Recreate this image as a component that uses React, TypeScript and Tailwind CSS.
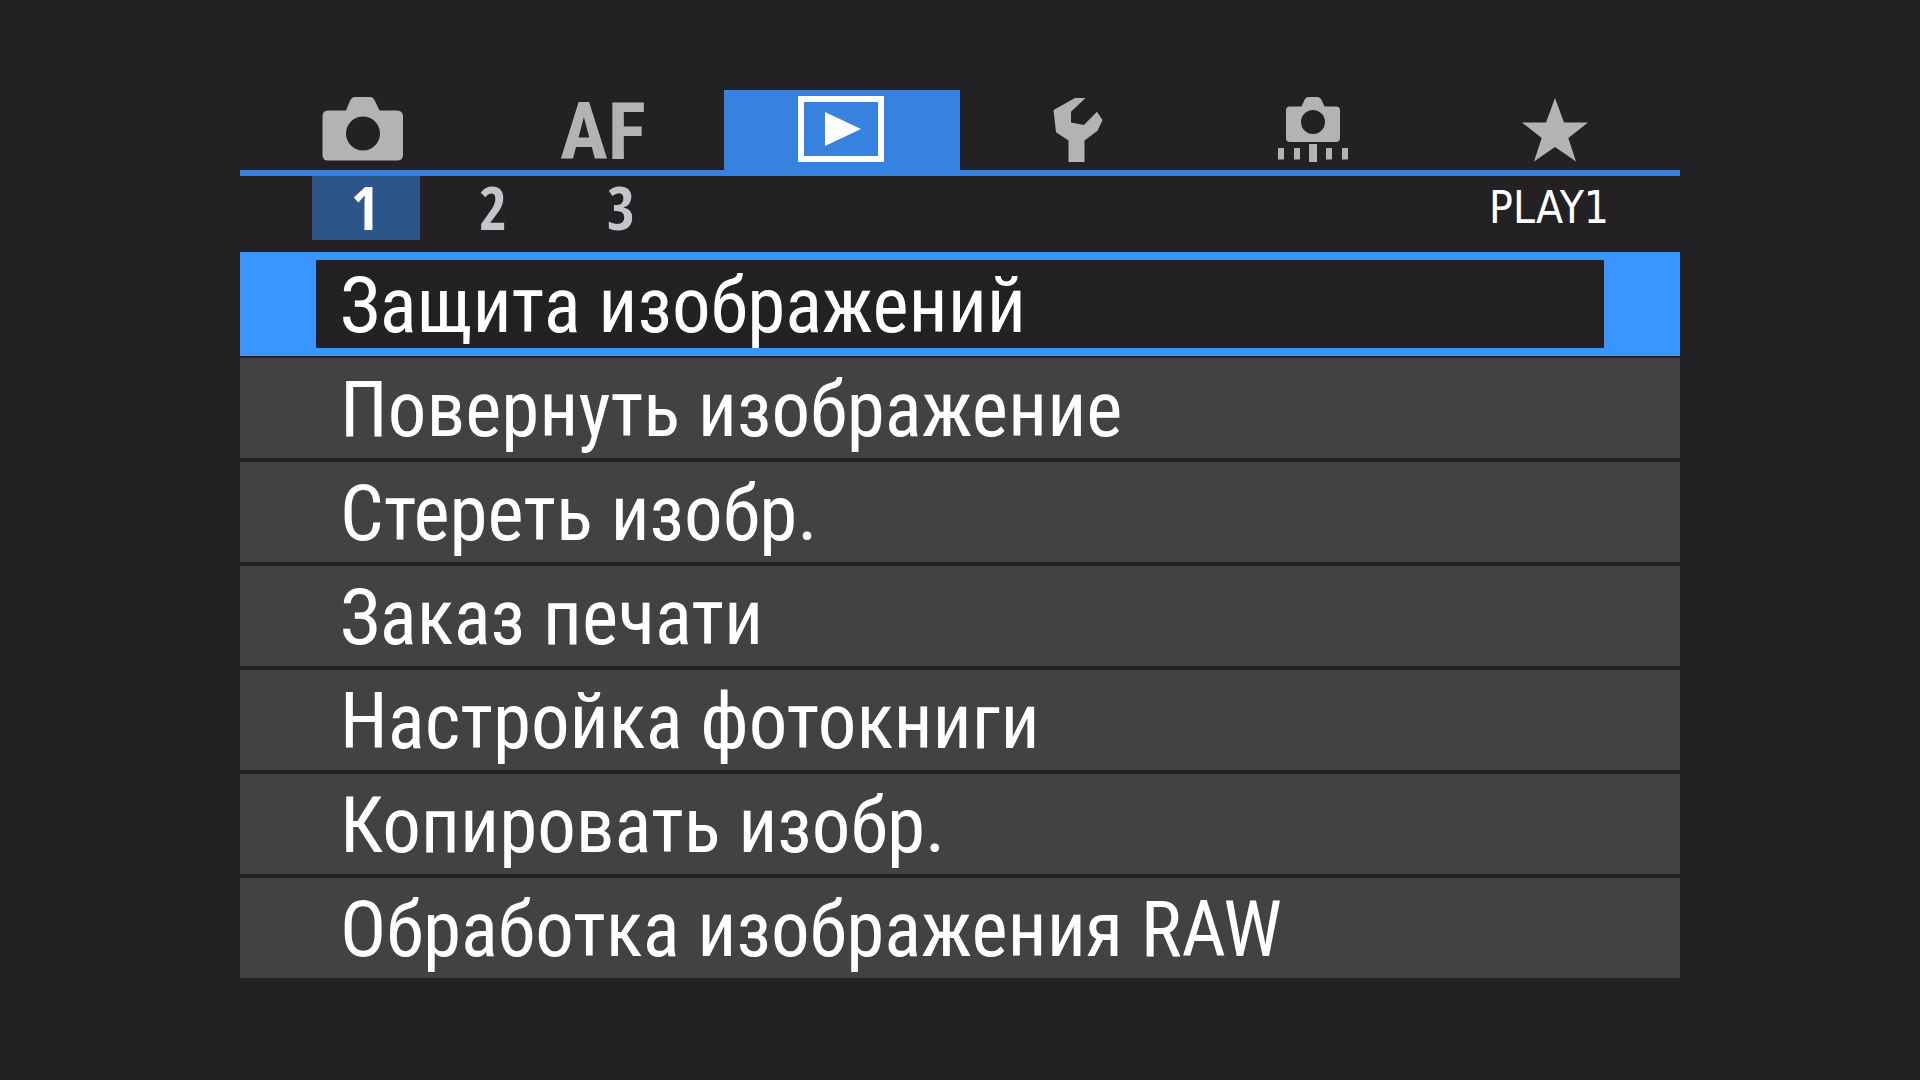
import type { ReactNode } from 'react';
import { useState } from 'react';
import clsx from 'clsx';

const ITEMS = [
  'Защита изображений',
  'Повернуть изображение',
  'Стереть изобр.',
  'Заказ печати',
  'Настройка фотокниги',
  'Копировать изобр.',
  'Обработка изображения RAW',
];

const PAGES = [1, 2, 3];

function CameraIcon() {
  return (
    <svg viewBox="0 0 82 66" className="h-[66px] w-[82px]" fill="currentColor" aria-hidden="true">
      <path
        fillRule="evenodd"
        d="M6 14.500H24L27.500 6Q29.500 1 33 1H48Q51.500 1 53.500 6L57.500 14.500H75Q81 14.500 81 20.500V59Q81 64.500 75 64.500H6Q.5 64.500 .5 59V20.500Q.5 14.500 6 14.500ZM41 20.500A17 17 0 1 0 41 54.500A17 17 0 1 0 41 20.500Z"
      />
    </svg>
  );
}

function PlayIcon() {
  return (
    <svg viewBox="0 0 86 66" className="h-[66px] w-[86px]" aria-hidden="true">
      <rect x="3" y="3" width="80" height="60" fill="none" stroke="#fff" strokeWidth="6" />
      <path d="M27 16L63 33L27 50Z" fill="#fff" />
    </svg>
  );
}

function WrenchIcon() {
  return (
    <svg viewBox="0 0 50 66" className="h-[66px] w-[50px]" fill="currentColor" aria-hidden="true">
      <path d="M22 2H32.500L18 15.700V26.500L31 29L44 15.700L49.500 24L44.500 34.700L31.500 44.500V66H15.500V44.500L3 36.300L.5 14Z" />
    </svg>
  );
}

function CustomIcon() {
  return (
    <svg viewBox="0 0 70 66" className="h-[66px] w-[70px]" fill="currentColor" aria-hidden="true">
      <path
        fillRule="evenodd"
        d="M12 10.500H23.500L26 5Q27.500 1 31 1H39Q42.500 1 44 5L46.500 10.500H58Q62 10.500 62 14.500V42Q62 46 58 46H12Q8 46 8 42V14.500Q8 10.500 12 10.500ZM35 14A12 12 0 1 0 35 38A12 12 0 1 0 35 14Z"
      />
      <path d="M0 52H6V63.500H0ZM16 52H22V63.500H16ZM31 48H39V66H31ZM48 52H54V63.500H48ZM64 52H70V63.500H64Z" />
    </svg>
  );
}

function StarIcon() {
  return (
    <svg viewBox="0 0 66 66" className="h-[66px] w-[66px]" fill="currentColor" aria-hidden="true">
      <path d="M33 2L42 26.500H66L46.300 42L54 65.500L33 51L12 65.500L19.700 42L0 26.500H24Z" />
    </svg>
  );
}

const TABS: { id: string; label: string; icon: ReactNode }[] = [
  { id: 'shoot', label: 'Съемка', icon: <CameraIcon /> },
  {
    id: 'af',
    label: 'AF',
    icon: <span className="font-['Roboto_Condensed','Noto_Sans',sans-serif] text-[80px] leading-[72px] font-bold">AF</span>,
  },
  { id: 'play', label: 'Просмотр', icon: <PlayIcon /> },
  { id: 'setup', label: 'Настройка', icon: <WrenchIcon /> },
  { id: 'custom', label: 'Пользовательские функции', icon: <CustomIcon /> },
  { id: 'my', label: 'Мое меню', icon: <StarIcon /> },
];

export default function App() {
  const [tab, setTab] = useState('play');
  const [page, setPage] = useState(1);
  const [selected, setSelected] = useState(0);

  return (
    <main className="min-h-screen bg-[#232124] px-[12.5%] pt-[90px] pb-[102px] text-white">
      {/* Main tabs */}
      <nav className="grid grid-cols-[238fr_238fr_236fr_232fr_234fr_246fr] gap-0.5 border-b-[6px] border-[#3882df] pr-0.5 pl-1">
        {TABS.map((t) => (
          <button
            key={t.id}
            type="button"
            aria-label={t.label}
            aria-pressed={t.id === tab}
            onClick={() => setTab(t.id)}
            className={clsx(
              'flex h-20 items-start justify-center pt-1.5',
              t.id === tab ? 'bg-[#3882df] pr-0.5 text-white' : 'text-[#b5b2b6]',
            )}
          >
            {t.icon}
          </button>
        ))}
      </nav>

      {/* Pages of the current tab */}
      <div className="mb-3 flex h-16 items-center justify-between pr-[71px] pl-[72px]">
        <div className="flex gap-5">
          {PAGES.map((p) => (
            <button
              key={p}
              type="button"
              aria-pressed={p === page}
              onClick={() => setPage(p)}
              className={clsx(
                "h-16 w-[108px] pr-0.5 pb-0.5 font-['Open_Sans_Condensed','Noto_Sans',sans-serif] text-[60px] leading-[60px] font-bold",
                p === page ? 'bg-[#2d5688] text-white' : 'text-[#c6c4c8]',
              )}
            >
              {p}
            </button>
          ))}
        </div>
        <span className="font-['DejaVu_Sans_Condensed','DejaVu_Sans',sans-serif] text-[44px] leading-[64px]">PLAY{page}</span>
      </div>

      {/* Menu items */}
      <ul className="flex flex-col gap-1">
        {ITEMS.map((item, i) => (
          <li key={item} className={clsx(i === selected && '-mb-0.5')}>
            <button
              type="button"
              onClick={() => setSelected(i)}
              className={clsx(
                "block w-full pt-1 text-left font-['Roboto_Condensed','Noto_Sans',sans-serif] text-[77px] whitespace-nowrap",
                i === selected
                  ? 'border-x-[76px] border-y-8 border-[#3b95ff] bg-[#232124] pl-6 leading-[84px]'
                  : 'bg-[#434144] pl-[100px] leading-[96px]',
              )}
            >
              {item}
            </button>
          </li>
        ))}
      </ul>
    </main>
  );
}
